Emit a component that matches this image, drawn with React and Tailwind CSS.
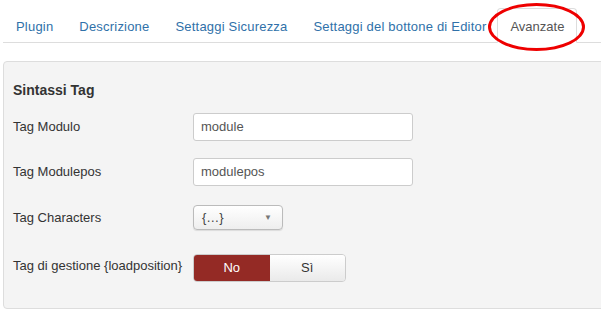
export default function App() {
  const tabs = ["Plugin", "Descrizione", "Settaggi Sicurezza", "Settaggi del bottone di Editor"];

  return (
    <div className="h-[324px] w-[601px] overflow-hidden bg-white font-['Liberation_Sans',Arial,sans-serif] text-[13px] text-[#333]">
      {/* tabs */}
      <div className="relative ml-[3px] mt-[8px] flex h-[35px] border-b border-[#ddd]">
        {tabs.map((t) => (
          <div key={t} className="px-[13px] pt-[9px] tracking-[0.2px] text-[#3071a9]">
            {t}
          </div>
        ))}
        <div className="ml-[-2px] -mb-px rounded-t-[4px] border border-b-white border-[#ddd] bg-white px-[12px] pt-[8px] text-[#555]">
          Avanzate
        </div>
        <div className="pointer-events-none absolute left-[485px] top-[-5px] h-[48px] w-[97px] rounded-[50%] border-[3px] border-[#e00]" />
      </div>

      {/* panel */}
      <div className="ml-[3px] mt-[18px] mr-[-10px] h-[248px] rounded-[4px] border border-[#ddd] bg-[#f4f4f4] px-[9px] pt-[18px]">
        <div className="text-[14px] font-bold text-[#333]">Sintassi Tag</div>

        <div className="mt-[12px] flex items-center">
          <div className="w-[180px]">Tag Modulo</div>
          <div className="flex h-[28px] w-[220px] items-center rounded-[3px] border border-[#ccc] bg-white px-[7px] text-[#555]">
            module
          </div>
        </div>

        <div className="mt-[17px] flex items-center">
          <div className="w-[180px]">Tag Modulepos</div>
          <div className="flex h-[28px] w-[220px] items-center rounded-[3px] border border-[#ccc] bg-white px-[7px] text-[#555]">
            modulepos
          </div>
        </div>

        <div className="mt-[19px] flex items-center">
          <div className="w-[180px]">Tag Characters</div>
          <div className="flex h-[25px] w-[90px] items-center justify-between rounded-[4px] border border-[#bbb] bg-gradient-to-b from-white to-[#eee] pl-[8px] pr-[10px] text-[#444] shadow-[0_1px_1px_rgba(0,0,0,0.1)]">
            <span>{"{…}"}</span>
            <span className="text-[8px] text-[#777]">▼</span>
          </div>
        </div>

        <div className="mt-[24px] flex items-start">
          <div className="w-[180px] pt-[2px]">Tag di gestione {"{loadposition}"}</div>
          <div className="flex h-[28px] w-[153px] overflow-hidden rounded-[4px] border border-[#ccc]">
            <div className="flex flex-1 items-center justify-center bg-[#942a25] text-white">No</div>
            <div className="flex flex-1 items-center justify-center bg-gradient-to-b from-white to-[#eaeaea] text-[#333]">Sì</div>
          </div>
        </div>
      </div>
    </div>
  );
}
